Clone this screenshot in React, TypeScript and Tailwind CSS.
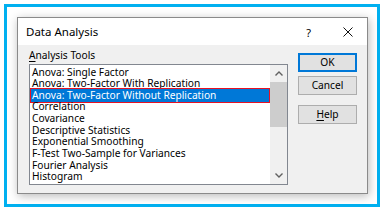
import React from "react";

const items = [
  "Anova: Single Factor",
  "Anova: Two-Factor With Replication",
  "Anova: Two-Factor Without Replication",
  "Correlation",
  "Covariance",
  "Descriptive Statistics",
  "Exponential Smoothing",
  "F-Test Two-Sample for Variances",
  "Fourier Analysis",
  "Histogram",
];

export default function App() {
  return (
    <div
      className="w-[386px] h-[213px] bg-white pt-[4px] pl-[4px] overflow-hidden"
      style={{ fontFamily: '"Noto Sans", "Open Sans", sans-serif' }}
    >
      <div className="w-[376px] h-[203px] border-[3px] border-[#00b0f0] pt-[10px] pl-[10px]">
        <div className="w-[351px] h-[177px] border border-[#8a8a8a] bg-[#f0f0f0] flex flex-col shadow-[1px_2px_9px_rgba(0,0,0,0.28)]">
          {/* title bar */}
          <div className="h-[27px] bg-white flex items-center pl-[8px] text-[11.5px] text-black">
            <span className="flex-1 leading-none pt-[1px]">Data Analysis</span>
            <span className="text-[11px] leading-none mr-[32px] pt-[1px]">?</span>
            <svg width="10" height="10" viewBox="0 0 10 10" className="mr-[14px]">
              <path d="M0.5 0.5 L9.5 9.5 M9.5 0.5 L0.5 9.5" stroke="#111" strokeWidth="1" />
            </svg>
          </div>
          {/* body */}
          <div className="flex-1 flex pl-[11px]">
            <div className="flex flex-col pt-[3px]">
              <div className="text-[10.2px] leading-[14px] text-black">
                <span className="underline underline-offset-[2px]">A</span>nalysis Tools
              </div>
              <div className="mt-[2px] w-[259px] h-[121px] border border-[#828790] bg-white flex">
                <div className="flex-1 pt-[1.5px] overflow-hidden">
                  {items.map((t, i) => (
                    <div
                      key={t}
                      className={
                        "relative h-[11.67px] leading-[11.67px] text-[10.2px] pl-[2px] whitespace-nowrap " +
                        (i === 2 ? "text-white" : "text-black")
                      }
                    >
                      {i === 2 && (
                        <div className="absolute left-0 right-0 -top-[1.5px] -bottom-[1.5px] bg-[#0078d7] border border-[#e81123]" />
                      )}
                      <span className="relative">{t}</span>
                    </div>
                  ))}
                </div>
                <div className="w-[17px] bg-[#f0f0f0] flex flex-col">
                  <div className="h-[17px] flex items-center justify-center">
                    <svg width="8" height="5" viewBox="0 0 8 5">
                      <path d="M0.5 4.5 L4 1 L7.5 4.5" stroke="#606060" strokeWidth="1.4" fill="none" />
                    </svg>
                  </div>
                  <div className="h-[45px] bg-[#cdcdcd]" />
                  <div className="flex-1" />
                  <div className="h-[17px] flex items-center justify-center">
                    <svg width="8" height="5" viewBox="0 0 8 5">
                      <path d="M0.5 0.5 L4 4 L7.5 0.5" stroke="#606060" strokeWidth="1.4" fill="none" />
                    </svg>
                  </div>
                </div>
              </div>
            </div>
            <div className="flex flex-col pt-[8px] ml-[10px] text-[10.2px] text-black">
              <div className="w-[59px] h-[19px] border-2 border-[#0078d7] bg-[#e1e1e1] flex items-center justify-center leading-none">
                OK
              </div>
              <div className="mt-[4px] w-[59px] h-[19px] border border-[#adadad] bg-[#e1e1e1] flex items-center justify-center leading-none">
                Cancel
              </div>
              <div className="mt-[10px] w-[59px] h-[19px] border border-[#adadad] bg-[#e1e1e1] flex items-center justify-center leading-none">
                <span>
                  <span className="underline underline-offset-[2px]">H</span>elp
                </span>
              </div>
            </div>
          </div>
        </div>
      </div>
    </div>
  );
}
